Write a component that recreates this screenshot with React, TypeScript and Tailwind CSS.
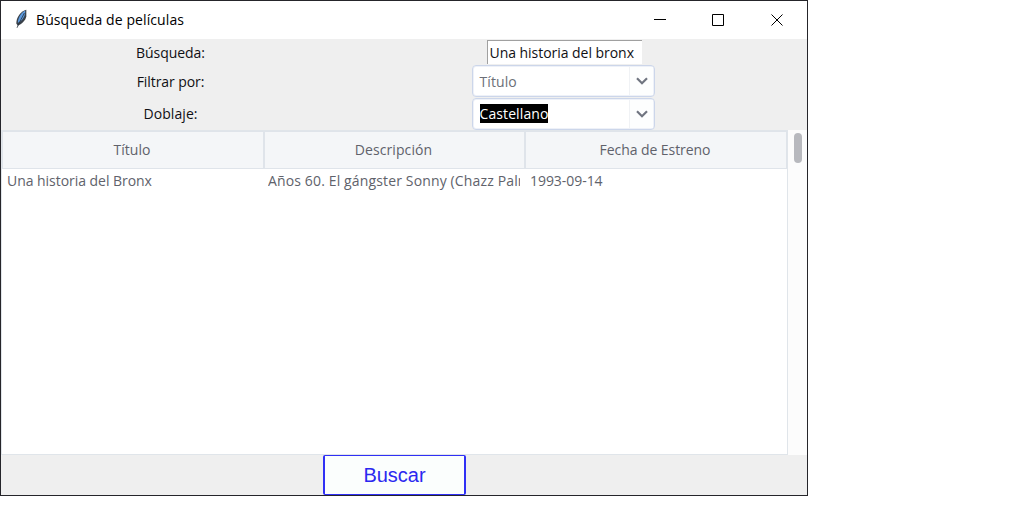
import React from "react";

const ui = "font-['Open_Sans','Noto_Sans',sans-serif]";

function Combo({ children }: { children: React.ReactNode }) {
  return (
    <div className="mr-0.5 flex h-8 w-[183px] items-center rounded-[4px] border border-[#ccd6ea] bg-white pl-[7px] shadow-[inset_0_0_0_1px_#eef1f8]">
      <div className="flex flex-1 items-center">{children}</div>
      <div className="my-px mr-px flex h-[28px] w-6 items-center justify-center border-l border-[#f0f2f5] bg-[#fdfefe] pl-0.5">
        <svg width="14" height="10" viewBox="0 0 14 10" fill="none" stroke="#707580" strokeWidth="2.2">
          <path d="M2 2.3 7 7.2 12 2.3" />
        </svg>
      </div>
    </div>
  );
}

export default function App() {
  return (
    <div className={`h-[532px] w-[1030px] overflow-hidden bg-white text-[14px] ${ui}`}>
      <div className="flex h-[496px] w-[808px] flex-col border border-[#25252a] bg-[#efefef] whitespace-nowrap">
        <header className="flex h-[38px] shrink-0 items-center bg-white pl-[13px]">
          <svg className="mb-0.5" width="14" height="20" viewBox="0 0 14 20">
            <path d="M12.3.7C7 2 2.2 8 2.3 14.5l1.5 2.2c3.7-1.6 7.8-5 8.5-9.5Z" fill="#3a4149" />
            <path d="M11.2 1.5C8 3 4 8.2 3.8 13.8l1.8-.7C9.8 9.5 11.4 6 11.2 1.5Z" fill="#5b9ae0" />
            <path d="M10.4 4C8.5 8 5.8 12 3 18.8" fill="none" stroke="#26303c" strokeWidth=".8" />
          </svg>
          <h1 className="ml-2 text-[14px] leading-5 tracking-[0.09px] text-black">Búsqueda de películas</h1>
          <svg className="ml-auto mr-[23px]" width="131" height="14" viewBox="0 0 131 14" fill="none" stroke="#000">
            <path d="M1 6.5h12M59.5 1.5h11v11h-11zM118.5 1.5l11 11m0-11-11 11" />
          </svg>
        </header>

        <div className="grid h-[91px] shrink-0 grid-cols-[339px_448px] grid-rows-[26px_32px_33px] items-center justify-items-center text-[#101014]">
          <label className="tracking-[-0.04px]">Búsqueda:</label>
          <div className="flex h-6 w-[155px] items-center border-t border-l border-[#a0a0a0] bg-white pl-0.5 tracking-[-0.04px]">
            Una historia del bronx
          </div>
          <label className="tracking-[-0.08px]">Filtrar por:</label>
          <Combo><span className="tracking-[0.1px] text-[#6c6f78]">Título</span></Combo>
          <label className="tracking-[0.08px]">Doblaje:</label>
          <Combo><span className="bg-black leading-[19px] tracking-[0.1px] text-white">Castellano</span></Combo>
        </div>

        <div className="flex h-[325px] shrink-0 text-[#60626b]">
          <div className="w-[787px] border border-[#e0e5ea] bg-white">
            <div className="grid h-[38px] grid-cols-[262px_261px_262px] border-y border-[#dfe4ea] text-center leading-[36px]">
              <div className="border border-y-0 border-[#dfe4ea] bg-[#f4f6f8] pr-[2px]">Título</div>
              <div className="border border-y-0 border-[#dfe4ea] bg-[#f4f6f8] pr-[2px] tracking-[0.1px]">Descripción</div>
              <div className="border border-y-0 border-[#dfe4ea] bg-[#f4f6f8] pr-[2px] tracking-[-0.06px]">Fecha de Estreno</div>
            </div>
            <div className="grid h-6 grid-cols-[261px_262px_262px] leading-[23px]">
              <div className="pl-[5px] tracking-[-0.04px]">Una historia del Bronx</div>
              <div className="mr-[5px] ml-[5px] overflow-hidden tracking-[0.14px]">Años 60. El gángster Sonny (Chazz Palm</div>
              <div className="pl-[5px] tracking-[-0.05px]">1993-09-14</div>
            </div>
          </div>
          <div className="flex flex-1 justify-center bg-[#fcfcfc] pt-[3px]">
            <div className="h-[30px] w-2 rounded-full bg-[#b8b9be]" />
          </div>
        </div>

        <footer className="flex flex-1 pl-[322px]">
          <button className="h-10 w-[143px] rounded-[2px] border-2 border-y border-[#3030f5] bg-[#fbfefd] font-['Liberation_Sans',sans-serif] text-[20px] text-[#2b28f0]">
            Buscar
          </button>
        </footer>
      </div>
    </div>
  );
}
